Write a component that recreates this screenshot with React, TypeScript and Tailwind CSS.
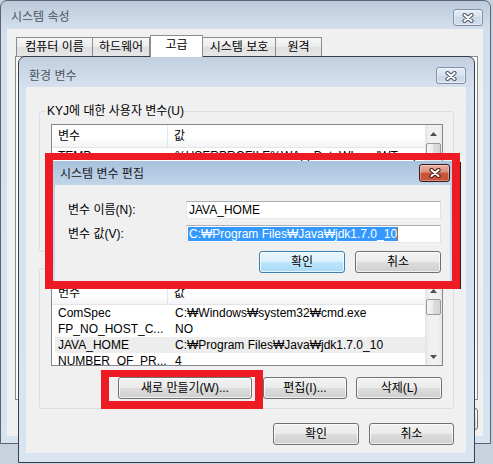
import React from "react";

type Row = [string, string];

function CloseBtn({ active }: { active?: boolean }) {
  return (
    <div
      className={
        active
          ? "flex h-[18px] w-[31px] items-center justify-center rounded-[3px] border border-[#3f1a12] bg-[linear-gradient(#eab0a2,#d88d7b_45%,#c8543b_50%,#c9523a)] shadow-[inset_0_0_0_1px_rgba(255,255,255,0.35)]"
          : "flex h-[17px] w-[30px] items-center justify-center rounded-[3px] border border-[#8190a6] bg-[linear-gradient(#e6edf6,#d6e1ee_50%,#c9d6e6_50%,#d2deec)] shadow-[inset_0_0_0_1px_rgba(255,255,255,0.45)]"
      }
    >
      <svg width="14" height="10" viewBox="0 0 14 10">
        <path d="M3.5 2 L10.5 8 M10.5 2 L3.5 8" stroke={active ? "#43160d" : "#4a5262"} strokeWidth="4.2" strokeLinecap="round" />
        <path d="M3.5 2 L10.5 8 M10.5 2 L3.5 8" stroke="#ffffff" strokeWidth="2.2" strokeLinecap="round" />
      </svg>
    </div>
  );
}

function Btn({ children, w, primary }: { children: React.ReactNode; w: string; primary?: boolean }) {
  return (
    <div
      className={`${w} flex h-[22px] shrink-0 items-center justify-center rounded-[3px] border text-[12px] leading-none text-black ${
        primary
          ? "border-[#3c7fb1] bg-[linear-gradient(#eaf6fd,#d9f0fc_50%,#bee6fd_50%,#a7d9f5)] shadow-[inset_0_0_0_1px_rgba(255,255,255,0.7)]"
          : "border-[#707070] bg-[linear-gradient(#f2f2f2,#ebebeb_50%,#dddddd_50%,#cfcfcf)] shadow-[inset_0_0_0_1px_rgba(255,255,255,0.7)]"
      }`}
    >
      {children}
    </div>
  );
}

function ScrollBar({ thumb }: { thumb: string }) {
  return (
    <div className="flex w-[17px] shrink-0 flex-col bg-[linear-gradient(90deg,#e3e3e3,#f1f1f1_25%,#f1f1f1_75%,#e7e7e7)]">
      <div className="flex h-[17px] shrink-0 items-center justify-center">
        <svg width="7" height="4" viewBox="0 0 7 4">
          <path d="M3.5 0 L7 4 L0 4Z" fill="#4d4d4d" />
        </svg>
      </div>
      <div className="flex-1">
        <div className={`${thumb} mx-[1px] h-[16px] rounded-[2px] border border-[#9a9a9a] bg-[linear-gradient(90deg,#f4f4f4,#ebebeb_50%,#dcdcdc_50%,#d4d4d4)]`} />
      </div>
      <div className="flex h-[17px] shrink-0 items-center justify-center">
        <svg width="7" height="4" viewBox="0 0 7 4">
          <path d="M0 0 L7 0 L3.5 4Z" fill="#4d4d4d" />
        </svg>
      </div>
    </div>
  );
}

function ListView({ rows, hl, thumb }: { rows: Row[]; hl?: number; thumb: string }) {
  return (
    <div className="flex h-[85px] w-[392px] border border-[#828790] bg-white">
      <div className="flex min-w-0 flex-1 flex-col overflow-hidden">
        <div className="flex h-[23px] shrink-0 border-b border-[#e5e5e5] bg-[linear-gradient(#ffffff,#ffffff_55%,#f3f4f6)]">
          <div className="flex w-[116px] items-center border-r border-[#e5e5e5] pl-[6px]">변수</div>
          <div className="flex items-center pl-[6px]">값</div>
        </div>
        {rows.map(([k, v], i) => (
          <div key={k} className={`ml-[3px] flex h-[16px] shrink-0 items-center whitespace-nowrap ${i === hl ? "bg-[#ededed]" : ""}`}>
            <div className="w-[113px] pl-[3px]">{k}</div>
            <div className="pl-[7px]">{v}</div>
          </div>
        ))}
      </div>
      <ScrollBar thumb={thumb} />
    </div>
  );
}

function Tab({ label, w, selected, first }: { label: string; w: string; selected?: boolean; first?: boolean }) {
  if (selected)
    return (
      <div className={`${w} relative z-10 -mb-px flex h-[22px] items-start justify-center border border-b-0 border-[#898c95] bg-white pt-[2px]`}>
        {label}
      </div>
    );
  return (
    <div className={`${w} ${first ? "" : "-ml-px"} flex h-[19px] items-center justify-center border border-b-0 border-[#898c95] bg-[linear-gradient(#f7f7f7,#ebebeb_50%,#dfdfdf_50%,#e6e6e6)]`}>
      {label}
    </div>
  );
}

export default function App() {
  const userRows: Row[] = [["TEMP", "%USERPROFILE%₩AppData₩Local₩Temp"]];
  const sysRows: Row[] = [
    ["ComSpec", "C:₩Windows₩system32₩cmd.exe"],
    ["FP_NO_HOST_C...", "NO"],
    ["JAVA_HOME", "C:₩Program Files₩Java₩jdk1.7.0_10"],
    ["NUMBER_OF_PR...", "4"],
  ];

  return (
    <div className="relative h-[464px] w-[493px] overflow-hidden bg-[#c8d1dd] font-['Liberation_Sans','Noto_Sans_CJK_KR',sans-serif] text-[12px] leading-[14px] text-black">
      {/* 시스템 속성 */}
      <div className="absolute left-0 top-0 h-[444px] w-[491px] rounded-t-[7px] border border-[#5b6470] bg-[linear-gradient(#bccbdc,#d3dfed_28px,#d8e3f0)]">
        <div className="flex h-[28px] items-start justify-between pl-[10px] pr-[7px]">
          <span className="mt-[9px] text-[#4d5561]">시스템 속성</span>
          <div className="mt-[8px]">
            <CloseBtn />
          </div>
        </div>
        <div className="ml-[6px] h-[407px] w-[476px] bg-[#f0f0f0] pl-[8px] pr-[5px] pt-[6px]">
          <div className="flex h-[21px] items-end pl-px">
            <Tab label="컴퓨터 이름" w="w-[77px]" first />
            <Tab label="하드웨어" w="w-[58px]" />
            <Tab label="고급" w="w-[53px]" selected />
            <Tab label="시스템 보호" w="w-[74px]" />
            <Tab label="원격" w="w-[47px]" />
          </div>
          <div className="h-[344px] w-[463px] border border-[#898c95] bg-[#fafafa]" />
          <div className="mt-[8px] flex justify-end gap-[7px]">
            <Btn w="w-[75px]">확인</Btn>
            <Btn w="w-[75px]">취소</Btn>
            <Btn w="w-[75px]">적용(A)</Btn>
          </div>
        </div>
      </div>

      {/* 환경 변수 */}
      <div className="absolute left-[18px] top-[56px] h-[407px] w-[457px] rounded-t-[7px] border border-[#3a3e46] bg-[linear-gradient(#c2cfdf,#d5e1ee_30px,#d9e4f1)]">
        <div className="flex h-[30px] items-start justify-between pl-[10px] pr-[8px]">
          <span className="mt-[12px] text-[#4d5561]">환경 변수</span>
          <div className="mt-[10px]">
            <CloseBtn />
          </div>
        </div>
        <div className="ml-[7px] h-[366px] w-[440px] bg-[#f0f0f0] pt-[24px]">
          <div className="relative ml-[13px] h-[141px] w-[415px] rounded-[3px] border border-[#d5dfe5] pl-[11px] pt-[12px]">
            <span className="absolute -top-[8px] left-[6px] bg-[#f0f0f0] px-[1px]">KYJ에 대한 사용자 변수(U)</span>
            <ListView rows={userRows} thumb="mt-[1px]" />
            <div className="mt-[11px] flex pl-[67px]">
              <div className="mr-[11px]">
                <Btn w="w-[134px]">새로 만들기(N)...</Btn>
              </div>
              <div className="mr-[9px]">
                <Btn w="w-[84px]">편집(E)...</Btn>
              </div>
              <Btn w="w-[86px]">삭제(D)</Btn>
            </div>
          </div>
          <div className="relative ml-[13px] mt-[16px] h-[141px] w-[415px] rounded-[3px] border border-[#d5dfe5] pl-[11px] pt-[12px]">
            <span className="absolute -top-[8px] left-[6px] bg-[#f0f0f0] px-[1px]">시스템 변수(S)</span>
            <ListView rows={sysRows} hl={2} thumb="mt-0" />
            <div className="mt-[11px] flex pl-[67px]">
              <div className="mr-[11px]">
                <Btn w="w-[134px]">새로 만들기(W)...</Btn>
              </div>
              <div className="mr-[9px]">
                <Btn w="w-[84px]">편집(I)...</Btn>
              </div>
              <Btn w="w-[86px]">삭제(L)</Btn>
            </div>
          </div>
          <div className="mt-[14px] flex justify-end gap-[10px] pr-[12px]">
            <Btn w="w-[86px]">확인</Btn>
            <Btn w="w-[85px]">취소</Btn>
          </div>
        </div>
      </div>

      {/* 시스템 변수 편집 */}
      <div className="absolute left-[53px] top-[161px] h-[128px] w-[399px] bg-[linear-gradient(#a8c2de,#c0d5ea_24px,#cddff1)]">
        <div className="flex h-[24px] items-start justify-between pl-[7px] pr-[2px]">
          <span className="mt-[6px] text-[#1b1b1b]">시스템 변수 편집</span>
          <div className="mt-[3px]">
            <CloseBtn active />
          </div>
        </div>
        <div className="ml-[2px] h-[96px] w-[395px] bg-[#f0f0f0] pl-[13px] pr-[9px] pt-[16px]">
          <div className="flex h-[18px] items-center justify-between">
            <span>변수 이름(N):</span>
            <div className="flex h-[18px] w-[255px] items-center border border-[#abadb3] border-b-[#e3e9ef] border-l-[#e2e3ea] border-r-[#dbdfe6] bg-white pl-[2px]">
              JAVA_HOME
            </div>
          </div>
          <div className="mt-[6px] flex h-[18px] items-center justify-between">
            <span>변수 값(V):</span>
            <div className="flex h-[18px] w-[255px] items-center border border-[#abadb3] border-b-[#e3e9ef] border-l-[#e2e3ea] border-r-[#dbdfe6] bg-white pl-[1px]">
              <span className="whitespace-nowrap bg-[#3399ff] pl-px text-white">C:₩Program Files₩Java₩jdk1.7.0_10</span>
              <span className="h-[14px] w-px bg-[#b8651f]" />
            </div>
          </div>
          <div className="mt-[8px] flex justify-end gap-[10px]">
            <Btn w="w-[86px]" primary>
              확인
            </Btn>
            <Btn w="w-[86px]">취소</Btn>
          </div>
        </div>
      </div>

      {/* red highlight marks */}
      <div className="absolute left-[45px] top-[153px] h-[136px] w-[415px] border-[8px] border-t-[7px] border-[#ed1c24]" />
      <div className="absolute left-[460px] top-[162px] h-[127px] w-px bg-[#222]" />
      <div className="absolute left-[101px] top-[370px] h-[39px] w-[162px] border-[8px] border-t-[7px] border-[#ed1c24]" />
    </div>
  );
}
